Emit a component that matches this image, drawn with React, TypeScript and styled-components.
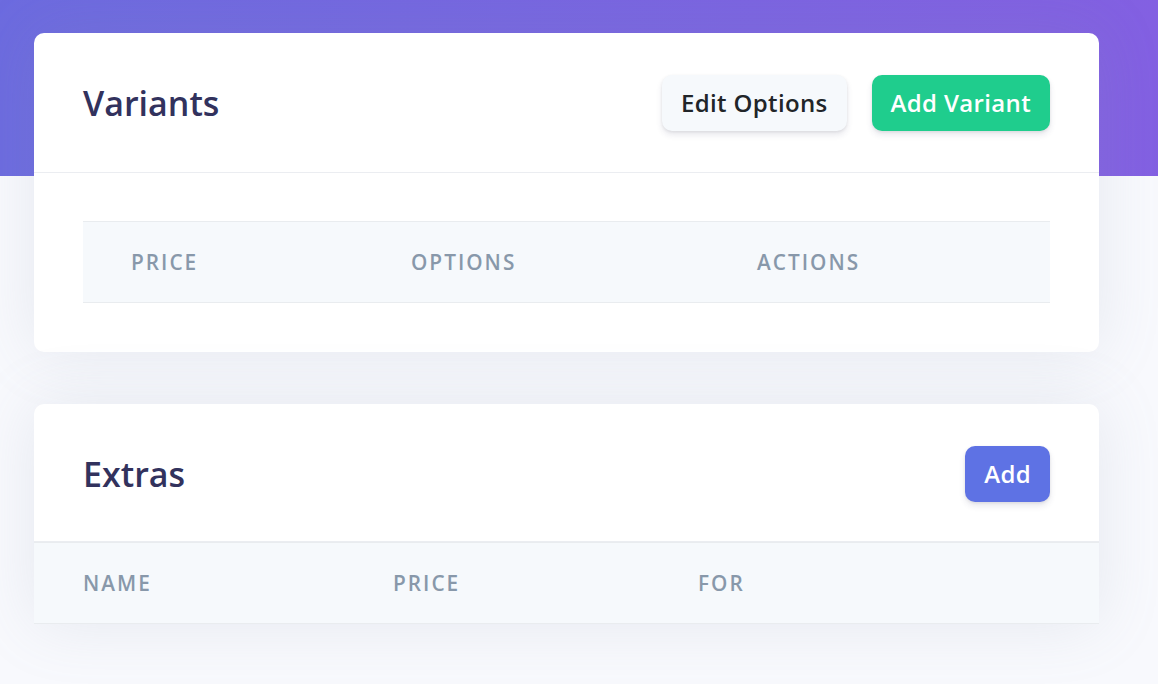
import styled, { createGlobalStyle } from "styled-components";

const GlobalStyle = createGlobalStyle`
  html, body {
    margin: 0;
    padding: 0;
  }
  body {
    font-family: "Open Sans", "Liberation Sans", sans-serif;
    -webkit-font-smoothing: antialiased;
  }
`;

const Page = styled.div`
  min-height: 100vh;
  background: linear-gradient(87deg, #6c6bdf 0%, #8360e2 100%) 0 0 / 100% 176px no-repeat,
    #f8f9fd;
`;

const Content = styled.main`
  display: flex;
  flex-direction: column;
  gap: 52px;
  width: 1065px;
  padding: 33px 0 0 34px;
`;

const Card = styled.section`
  background: #fff;
  border-radius: 10px;
  box-shadow: 0 0 64px rgba(136, 152, 170, 0.16);
`;

const CardHeader = styled.header<{ $bottom?: number }>`
  display: flex;
  align-items: center;
  justify-content: space-between;
  padding: 42px 49px ${(p) => p.$bottom ?? 41}px;
  border-bottom: 1px solid #ebedf1;
`;

const Title = styled.h3`
  margin: 0;
  font-size: 34px;
  font-weight: 600;
  color: #32325d;
  line-height: 1.3;
`;

const Actions = styled.div`
  display: flex;
  gap: 25px;
`;

const Button = styled.button<{ $variant: "light" | "success" | "primary" }>`
  border: none;
  border-radius: 10px;
  padding: 10px 19px;
  font-family: inherit;
  font-size: 24px;
  font-weight: 600;
  letter-spacing: 0.35px;
  line-height: 36px;
  cursor: pointer;
  box-shadow: 0 4px 6px rgba(50, 50, 93, 0.11), 0 1px 3px rgba(0, 0, 0, 0.08);
  color: ${(p) => (p.$variant === "light" ? "#212529" : "#fff")};
  background: ${(p) =>
    p.$variant === "light" ? "#f6f9fc" : p.$variant === "success" ? "#1fcd8d" : "#5e72e4"};
`;

const CardBody = styled.div`
  padding: 48px 49px 49px;
`;

const HeadRow = styled.div<{ $cols: string; $pad: number }>`
  display: grid;
  grid-template-columns: ${(p) => p.$cols};
  background: #f6f9fc;
  border-top: 1px solid #e9ecef;
  border-bottom: 1px solid #e9ecef;

  & > span {
    padding: 24px ${(p) => p.$pad}px;
  }
`;

const HeadCell = styled.span`
  font-size: 20.8px;
  font-weight: 600;
  line-height: 32px;
  letter-spacing: 2px;
  text-transform: uppercase;
  color: #8898aa;
`;

export default function App() {
  return (
    <>
      <GlobalStyle />
      <Page>
        <Content>
          <Card>
            <CardHeader>
              <Title>Variants</Title>
              <Actions>
                <Button $variant="light">Edit Options</Button>
                <Button $variant="success">Add Variant</Button>
              </Actions>
            </CardHeader>
            <CardBody>
              <HeadRow $cols="280px 346px 1fr" $pad={48}>
                <HeadCell>Price</HeadCell>
                <HeadCell>Options</HeadCell>
                <HeadCell>Actions</HeadCell>
              </HeadRow>
            </CardBody>
          </Card>

          <Card>
            <CardHeader $bottom={39}>
              <Title>Extras</Title>
              <Button $variant="primary">Add</Button>
            </CardHeader>
            <HeadRow $cols="310px 305px 1fr" $pad={49}>
              <HeadCell>Name</HeadCell>
              <HeadCell>Price</HeadCell>
              <HeadCell>For</HeadCell>
            </HeadRow>
          </Card>
        </Content>
      </Page>
    </>
  );
}
